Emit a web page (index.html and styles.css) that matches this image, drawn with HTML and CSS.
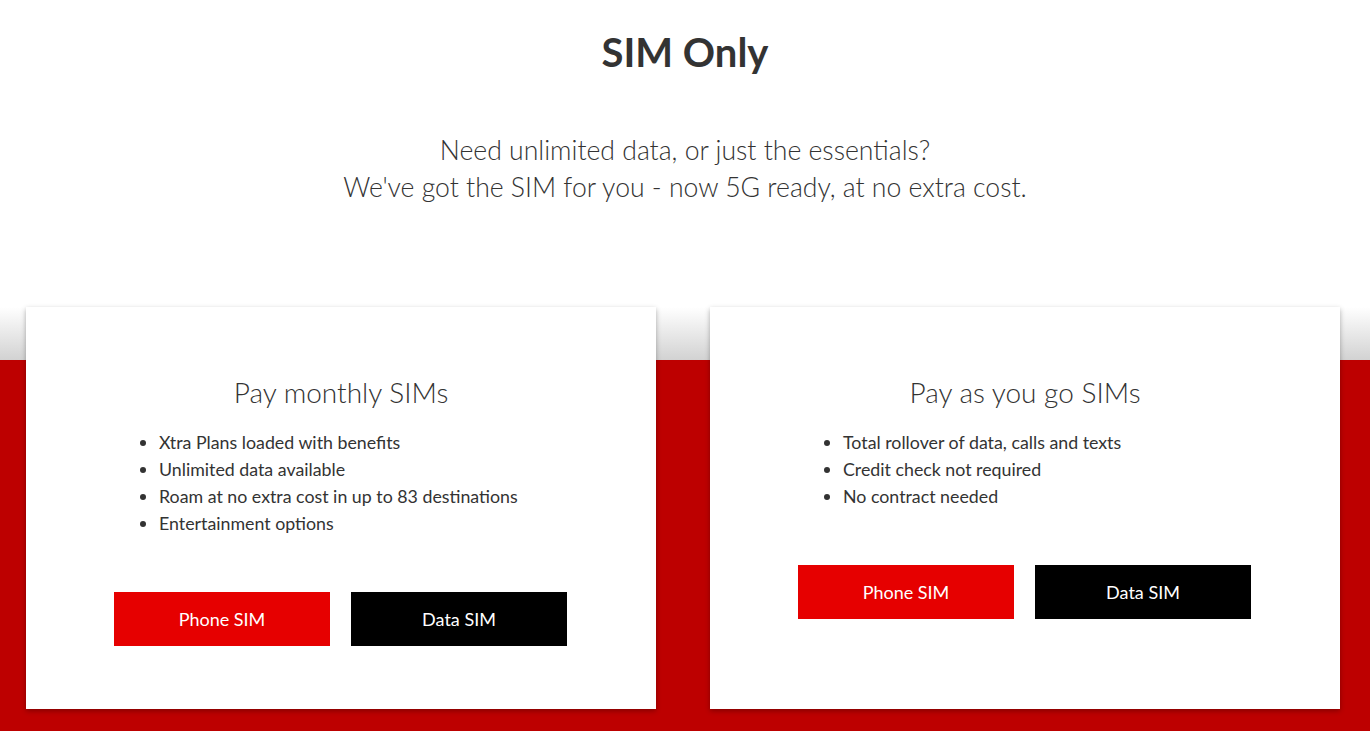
FILE: index.html
```html
<!DOCTYPE html>
<html lang="en">
<head>
    <meta charset="UTF-8">
    <meta name="viewport" content="width=device-width, initial-scale=1.0">
    <title>SIM Only</title>
    <link rel="stylesheet" href="styles.css">
</head>
<body>
    <header class="intro">
        <h1>SIM Only</h1>
        <p class="lead">Need unlimited data, or just the essentials?<br>We've got the SIM for you - now 5G ready, at no extra cost.</p>
    </header>

    <section class="plans">
        <div class="card">
            <h2>Pay monthly SIMs</h2>
            <ul>
                <li>Xtra Plans loaded with benefits</li>
                <li>Unlimited data available</li>
                <li>Roam at no extra cost in up to 83 destinations</li>
                <li>Entertainment options</li>
            </ul>
            <div class="actions">
                <a href="#" class="btn btn-red">Phone SIM</a>
                <a href="#" class="btn btn-black">Data SIM</a>
            </div>
        </div>
        <div class="card">
            <h2>Pay as you go SIMs</h2>
            <ul>
                <li>Total rollover of data, calls and texts</li>
                <li>Credit check not required</li>
                <li>No contract needed</li>
            </ul>
            <div class="actions">
                <a href="#" class="btn btn-red">Phone SIM</a>
                <a href="#" class="btn btn-black">Data SIM</a>
            </div>
        </div>
    </section>
</body>
</html>
```
FILE: styles.css
```css
body {
    margin: 0;
    font-family: Lato, 'Open Sans', sans-serif;
    color: #333;
    background-color: #fff;
}
.intro {
    text-align: center;
    padding-top: 26px;
    height: 307px;
    box-sizing: border-box;
}
h1 {
    margin: 0;
    font-size: 40px;
    line-height: 52px;
    font-weight: 700;
    color: #333;
}
.lead {
    margin: 54px 0 0;
    font-size: 26.6px;
    line-height: 37px;
    font-weight: 300;
}
.plans {
    display: flex;
    gap: 54px;
    padding: 0 30px 22px 26px;
    background: linear-gradient(to bottom, #fff 0, #d2d2d2 53px, #bd0000 53px);
}
.card {
    width: 630px;
    height: 402px;
    box-sizing: border-box;
    background-color: #fff;
    padding: 68px 0 0 133px;
    box-shadow: 0 2px 5px rgba(0, 0, 0, 0.3);
}
h2 {
    margin: 0 0 0 -133px;
    font-size: 28px;
    line-height: 34px;
    font-weight: 300;
    text-align: center;
}
ul {
    margin: 20px 0 0;
    padding-left: 0;
    font-size: 17.8px;
    line-height: 27px;
}
.actions {
    display: flex;
    gap: 21px;
    margin: 55px 0 0 -45px;
}
.btn {
    display: block;
    width: 216px;
    height: 54px;
    line-height: 54px;
    text-align: center;
    color: #fff;
    font-size: 18px;
    text-decoration: none;
}
.btn-red {
    background-color: #e60000;
}
.btn-black {
    background-color: #000;
}
```
